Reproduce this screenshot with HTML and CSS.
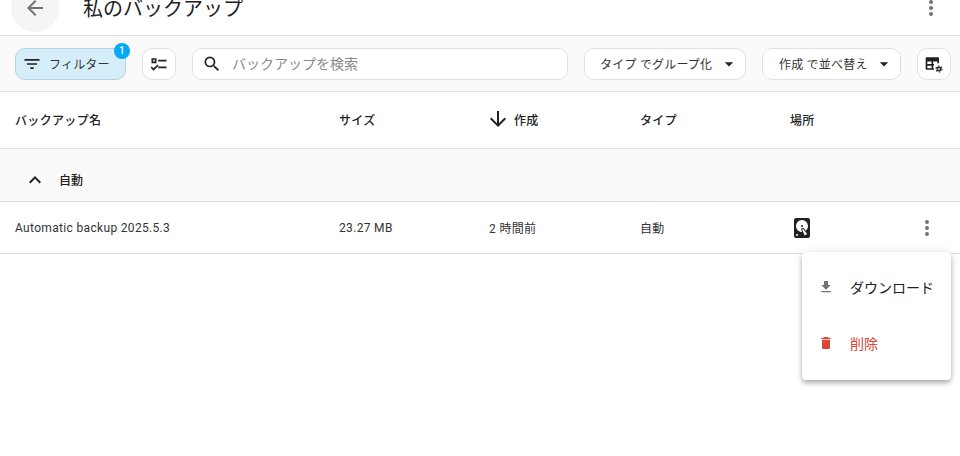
FILE: index.html
```html
<!DOCTYPE html>
<html lang="ja">
<head>
<meta charset="utf-8">
<title>私のバックアップ</title>
<link rel="stylesheet" href="styles.css">
</head>
<body>
<header class="topbar">
  <button class="back"><svg viewBox="0 0 24 24" class="i24 grey"><path d="M20 11H7.83l5.59-5.59L12 4l-8 8 8 8 1.41-1.41L7.83 13H20v-2z"/></svg></button>
  <h1 class="title">私のバックアップ</h1>
  <span class="top-more"><svg viewBox="0 0 24 24" class="i24 grey"><path d="M12 16a2 2 0 1 1 0 4 2 2 0 0 1 0-4zm0-6a2 2 0 1 1 0 4 2 2 0 0 1 0-4zm0-6a2 2 0 1 1 0 4 2 2 0 0 1 0-4z"/></svg></span>
</header>
<section class="toolbar">
  <button class="chip filter">
    <svg viewBox="0 0 24 24" class="i20 dark"><path d="M6 13h12v-2H6m-3-5v2h18V6M10 18h4v-2h-4v2z"/></svg>
    <span>フィルター</span>
    <span class="badge">1</span>
  </button>
  <button class="square"><svg viewBox="0 0 24 24" class="i20 dark"><path fill-rule="evenodd" d="M3 5h6v6H3V5zm2 2v2h2V7H5zm6 0h10v2H11V7zm0 8h10v2H11v-2zm-5.5 5L2 16.5 3.4 15l2.1 2.1L10.1 12.6l1.4 1.4L5.5 20z"/></svg></button>
  <label class="search">
    <svg viewBox="0 0 24 24" class="i20 dark"><path d="M9.5,3A6.5,6.5 0 0,1 16,9.5C16,11.11 15.41,12.59 14.44,13.73L14.71,14H15.5L20.5,19L19,20.5L14,15.5V14.71L13.73,14.44C12.59,15.41 11.11,16 9.5,16A6.5,6.5 0 0,1 3,9.5A6.5,6.5 0 0,1 9.5,3M9.5,5C7,5 5,7 5,9.5C5,12 7,14 9.5,14C12,14 14,12 14,9.5C14,7 12,5 9.5,5Z"/></svg>
    <span class="placeholder">バックアップを検索</span>
  </label>
  <button class="chip select group"><span>タイプ でグループ化</span><svg viewBox="0 0 24 24" class="i20 dark"><path d="M7 10l5 5 5-5H7z"/></svg></button>
  <button class="chip select sort"><span>作成 で並べ替え</span><svg viewBox="0 0 24 24" class="i20 dark"><path d="M7 10l5 5 5-5H7z"/></svg></button>
  <button class="square"><svg viewBox="0 0 24 24" class="i20 dark"><path fill-rule="evenodd" d="M3 4h14a1 1 0 0 1 1 1v6h-2V9h-5v3h1v2h-1v3h1v2H3a1 1 0 0 1-1-1V5a1 1 0 0 1 1-1zM4 9v3h5V9H4zM4 14v3h5v-3H4z"/><circle class="gear-teeth" cx="18" cy="18" r="3.6"/><circle class="gear-ring" cx="18" cy="18" r="2"/></svg></button>
</section>
<div class="table">
  <div class="row head">
    <div class="c-name">バックアップ名</div>
    <div class="c-size">サイズ</div>
    <div class="c-created"><svg viewBox="0 0 24 24" class="i24 ink sort-arrow"><path d="M13 4v12.17l5.59-5.58L20 12l-8 8-8-8 1.41-1.41L11 16.17V4h2z"/></svg><span>作成</span></div>
    <div class="c-type">タイプ</div>
    <div class="c-place">場所</div>
  </div>
  <div class="group-row">
    <svg viewBox="0 0 24 24" class="i24 ink"><path d="M12 8l-6 6 1.41 1.41L12 10.83l4.59 4.58L18 14l-6-6z"/></svg>
    <span>自動</span>
  </div>
  <div class="row body">
    <div class="c-name">Automatic backup 2025.5.3</div>
    <div class="c-size">23.27 MB</div>
    <div class="c-created">2 時間前</div>
    <div class="c-type">自動</div>
    <div class="c-place"><svg viewBox="0 0 24 24" class="i24 ink"><path fill-rule="evenodd" d="M6,2H18A2,2 0 0,1 20,4V20A2,2 0 0,1 18,22H6A2,2 0 0,1 4,20V4A2,2 0 0,1 6,2M12,4A6,6 0 0,0 6,10C6,13.31 8.69,16 12.1,16L11.22,13.77C10.95,13.29 11.11,12.68 11.59,12.4L12.45,11.9C12.93,11.63 13.54,11.79 13.82,12.27L15.74,14.69C17.12,13.59 18,11.9 18,10A6,6 0 0,0 12,4M12,9A1,1 0 0,1 13,10A1,1 0 0,1 12,11A1,1 0 0,1 11,10A1,1 0 0,1 12,9M7,18A1,1 0 0,0 6,19A1,1 0 0,0 7,20A1,1 0 0,0 8,19A1,1 0 0,0 7,18M12.09,13.27L14.58,19.58L17.17,18.08L12.95,12.77L12.09,13.27Z"/></svg></div>
    <div class="c-more"><svg viewBox="0 0 24 24" class="i24 grey"><path d="M12 16a2 2 0 1 1 0 4 2 2 0 0 1 0-4zm0-6a2 2 0 1 1 0 4 2 2 0 0 1 0-4zm0-6a2 2 0 1 1 0 4 2 2 0 0 1 0-4z"/></svg></div>
  </div>
</div>
<div class="menu">
  <div class="menu-item"><svg viewBox="0 0 24 24" class="i16 grey"><path d="M5 20h14v-2H5v2zM19 9h-4V3H9v6H5l7 7 7-7z"/></svg><span>ダウンロード</span></div>
  <div class="menu-item danger"><svg viewBox="0 0 24 24" class="i16 red"><path d="M19 4h-3.5l-1-1h-5l-1 1H5v2h14V4zM6 19a2 2 0 0 0 2 2h8a2 2 0 0 0 2-2V7H6v12z"/></svg><span>削除</span></div>
</div>
</body>
</html>
```
FILE: styles.css
```css
* { box-sizing: border-box; }
html, body { margin: 0; padding: 0; }
body {
  width: 960px;
  height: 456px;
  overflow: hidden;
  position: relative;
  background: #fff;
  color: #212121;
  font-family: Roboto, "Noto Sans CJK JP", sans-serif;
  font-size: 12px;
}
button { font: inherit; color: inherit; background: none; padding: 0; margin: 0; border: 0; }
svg { display: block; flex: none; }
.i24 { width: 24px; height: 24px; }
.i20 { width: 20px; height: 20px; }
.i16 { width: 16px; height: 16px; }
.grey { fill: #727272; }
.dark { fill: #212121; }
.ink { fill: #212121; }
.red { fill: #db4437; }
.gear-teeth { fill: none; stroke: #212121; stroke-width: 1.4; stroke-dasharray: 1.9 1.9; }
.gear-ring { fill: none; stroke: #212121; stroke-width: 1.8; }

.topbar {
  height: 56px;
  margin-top: -20px;
  display: flex;
  align-items: center;
  padding: 0 17px 0 11px;
  border-bottom: 1px solid #e0e0e0;
}
.back {
  width: 48px;
  height: 48px;
  border-radius: 50%;
  background: #f5f5f5;
  display: flex;
  align-items: center;
  justify-content: center;
}
.title {
  margin: 0 0 0 24px;
  font-size: 20px;
  font-weight: 400;
  flex: 1;
}

.toolbar {
  height: 56px;
  display: flex;
  align-items: center;
  padding: 0 9px 0 15px;
  background: #fafafa;
  border-bottom: 1px solid #e0e0e0;
}
.chip, .square, .search {
  height: 32px;
  border: 1px solid #e0e0e0;
  border-radius: 10px;
  background: #fff;
  display: flex;
  align-items: center;
}
.filter {
  position: relative;
  width: 111px;
  padding-left: 6px;
  gap: 7px;
  background: #d6eefa;
  border-color: #b0d4e4;
  margin-right: 16px;
  color: #333;
  letter-spacing: .2px;
}
.badge {
  position: absolute;
  top: -6px;
  right: -5px;
  width: 16px;
  height: 16px;
  border-radius: 50%;
  background: #03a9f4;
  color: #fff;
  font-size: 10px;
  font-weight: 500;
  display: flex;
  align-items: center;
  justify-content: center;
}
.square { width: 34px; justify-content: center; }
.search {
  width: 376px;
  margin: 0 16px;
  padding-left: 9px;
  gap: 10px;
  font-size: 14px;
}
.placeholder { color: #8a8a8a; padding-bottom: 2px; }
.select { justify-content: space-between; padding: 0 6px 0 15px; color: #333; letter-spacing: .2px; }
.group { width: 162px; margin-right: 16px; }
.sort { width: 139px; margin-right: 16px; padding-left: 16px; }

.row { display: flex; align-items: center; letter-spacing: .33px; }
.row > div { display: flex; align-items: center; }
.head { height: 57px; padding-bottom: 2px; border-bottom: 1px solid #e0e0e0; font-weight: 500; }
.body { height: 52px; border-bottom: 1px solid #e0e0e0; color: #333; }
.c-name { width: 339px; padding-left: 15px; }
.c-size { width: 150px; }
.c-created { width: 151px; }
.head .c-created { gap: 4px; }
.sort-arrow { margin-left: -3px; }
.c-type { width: 150px; }
.c-place { width: 125px; }
.c-more { width: 24px; }
.group-row {
  height: 53px;
  padding: 9px 0 0 23px;
  display: flex;
  align-items: center;
  gap: 12px;
  background: #fafafa;
  border-bottom: 1px solid #e0e0e0;
  font-weight: 500;
}

.menu {
  position: absolute;
  left: 802px;
  top: 252px;
  width: 149px;
  height: 128px;
  padding: 7px 0;
  background: #fff;
  border-radius: 4px;
  box-shadow: 0 2px 4px -1px rgba(0,0,0,.2), 0 4px 5px rgba(0,0,0,.14), 0 1px 10px rgba(0,0,0,.12);
}
.menu-item {
  height: 56px;
  display: flex;
  align-items: center;
  padding-left: 16px;
  gap: 16px;
  font-size: 14px;
}
.danger { color: #db4437; }
```
